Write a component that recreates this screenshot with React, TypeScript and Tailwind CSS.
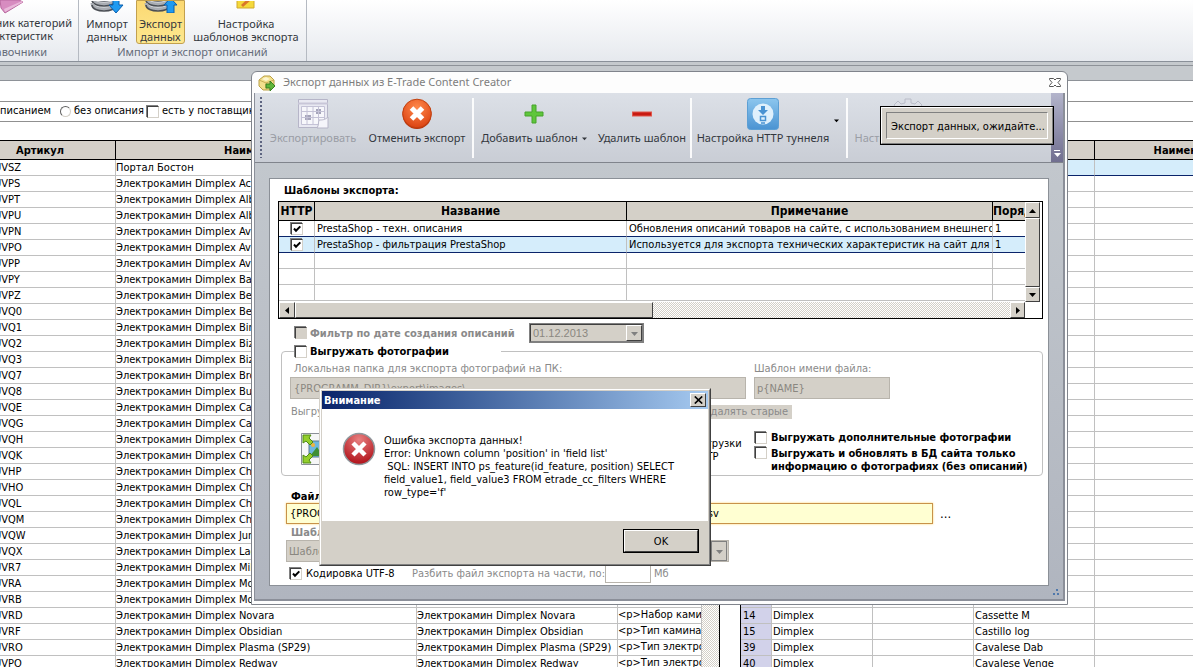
import type { ReactNode } from 'react';

const rows = [
  ['UVSZ', 'Портал Бостон', ''],
  ['UVPS', 'Электрокамин Dimplex Academy', ''],
  ['UVPT', 'Электрокамин Dimplex Albany', ''],
  ['UVPU', 'Электрокамин Dimplex Albany', ''],
  ['UVPN', 'Электрокамин Dimplex Avalon', ''],
  ['UVPO', 'Электрокамин Dimplex Avalon', ''],
  ['UVPP', 'Электрокамин Dimplex Avalon', ''],
  ['UVPY', 'Электрокамин Dimplex Bach', ''],
  ['UVPZ', 'Электрокамин Dimplex Bella', ''],
  ['UVQ0', 'Электрокамин Dimplex Belvedere', ''],
  ['UVQ1', 'Электрокамин Dimplex Bingham', ''],
  ['UVQ2', 'Электрокамин Dimplex Bizet', ''],
  ['UVQ3', 'Электрокамин Dimplex Bizet', ''],
  ['UVQ7', 'Электрокамин Dimplex Brookline', ''],
  ['UVQ8', 'Электрокамин Dimplex Burbank', ''],
  ['UVQE', 'Электрокамин Dimplex Cassette', ''],
  ['UVQG', 'Электрокамин Dimplex Castillo', ''],
  ['UVQH', 'Электрокамин Dimplex Cavalese', ''],
  ['UVQK', 'Электрокамин Dimplex Chalet', ''],
  ['UVHP', 'Электрокамин Dimplex Cheriton', ''],
  ['UVHO', 'Электрокамин Dimplex Cheriton', ''],
  ['UVQL', 'Электрокамин Dimplex Chester', ''],
  ['UVQM', 'Электрокамин Dimplex Chili', ''],
  ['UVQW', 'Электрокамин Dimplex Juneau', ''],
  ['UVQX', 'Электрокамин Dimplex Lagos', ''],
  ['UVR7', 'Электрокамин Dimplex Milan', ''],
  ['UVRA', 'Электрокамин Dimplex Mozart', ''],
  ['UVRB', 'Электрокамин Dimplex Mozart', ''],
  ['UVRD', 'Электрокамин Dimplex Novara', '<p>Набор каминный'],
  ['UVRF', 'Электрокамин Dimplex Obsidian', '<p>Тип камина - электро'],
  ['UVRO', 'Электрокамин Dimplex Plasma (SP29)', '<p>Тип электрокамина'],
  ['UVPQ', 'Электрокамин Dimplex Redway', '<p>Тип электрокамина'],
];

const found: Record<number, [string, string]> = {
  28: ['14', 'Cassette M'],
  29: ['15', 'Castillo log'],
  30: ['39', 'Cavalese Dab'],
  31: ['40', 'Cavalese Venge'],
};

const templates = [
  ['PrestaShop - техн. описания', 'Обновления описаний товаров на сайте, с использованием внешнего кода', '1'],
  ['PrestaShop - фильтрация PrestaShop', 'Используется для экспорта технических характеристик на сайт для фильтра', '1'],
];

const hatch = 'bg-[repeating-conic-gradient(#ffffff_0_25%,#d4d0c8_0_50%)] bg-[length:2px_2px]';
const raised = 'bg-[#d4d0c8] border border-t-white border-l-white border-r-[#404040] border-b-[#404040]';
const gridHead = 'bg-[#d4d0c8] border-r border-b border-black p-0 font-bold overflow-hidden whitespace-nowrap';
const gridCell = 'border-r border-b border-[#c0c0c0] p-0 overflow-hidden whitespace-nowrap';

function Check({ id, checked, disabled, label }: { id: string; checked?: boolean; disabled?: boolean; label?: string }) {
  return (
    <span className="grid size-3 shrink-0">
      <input id={id} type="checkbox" defaultChecked={checked} disabled={disabled} aria-label={label}
        className="peer col-start-1 row-start-1 size-3 appearance-none border border-t-[#404040] border-l-[#404040] border-r-[#d4d0c8] border-b-[#d4d0c8] bg-white shadow-[-1px_-1px_0_#808080] disabled:bg-[#d4d0c8]" />
      <svg viewBox="0 0 12 12" className="pointer-events-none invisible col-start-1 row-start-1 size-3 peer-checked:visible">
        <path d="M3 5.500 L5 7.800 L9.300 3.400" fill="none" stroke="#000" strokeWidth="2" />
      </svg>
    </span>
  );
}

function Arrow({ dir, color = '#000', small }: { dir: 'up' | 'down' | 'left' | 'right'; color?: string; small?: boolean }) {
  const d = { up: 'M0 6h7L3.5 2z', down: 'M0 2h7L3.5 6z', left: 'M5 0v7L1 3.5z', right: 'M2 0v7l4-3.5z' }[dir];
  return <svg viewBox="0 0 7 7" className={small ? 'size-[5px]' : 'size-[7px]'}><path d={d} fill={color} /></svg>;
}

function DbIcon({ up }: { up?: boolean }) {
  return (
    <svg viewBox="0 0 34 32" className="h-8 w-[34px]">
      <path d="M2 4v19c0 9 24 9 24 0V4z" fill="#eceef0" />
      {[7, 12, 17, 22].map(y => (
        <g key={y} fill="none">
          <path d={`M2 ${y}c0 8 24 8 24 0`} stroke="#a9adb3" strokeWidth="3" />
          <path d={`M2 ${y + 2}c0 8 24 8 24 0`} stroke="#4b4f55" strokeWidth="1.600" />
        </g>
      ))}
      {up
        ? <path d="M26.500 17l6.500 7h-3v8h-7v-8h-3z" fill="#1f9af0" stroke="#0b5fae" />
        : <path d="M23 14h6v10h4l-7 8-7-8h4z" fill="#1f9af0" stroke="#0b5fae" />}
    </svg>
  );
}

function RibbonButton({ icon, lines, active, width }: { icon: ReactNode; lines: string[]; active?: boolean; width: string }) {
  return (
    <button className={`flex flex-col items-center overflow-hidden border text-[11px] leading-[13px] text-[#33373d] ${width} ${active ? 'rounded-b-[3px] border-[#c2a04e] bg-linear-to-b from-[#fbd871] to-[#fde88f]' : 'border-transparent'}`}>
      <span className="-mt-5 flex h-9 items-start">{icon}</span>
      {lines.map(l => <span key={l} className="whitespace-nowrap">{l}</span>)}
    </button>
  );
}

function Ribbon() {
  return (
    <header className="flex h-[62px] shrink-0 overflow-hidden border-b border-[#8a9099] bg-linear-to-b from-white to-[#e6e9ee] font-['Noto_Sans',sans-serif]">
      <section className="flex w-[79px] flex-col justify-between overflow-hidden border-r border-[#b5bac2]">
        <button className="-ml-9 flex h-[44px] w-[108px] shrink-0 flex-col items-end text-[11px] leading-[13px] text-[#33373d]">
          <svg viewBox="0 0 24 14" className="mr-[48px] h-[14px] w-6 shrink-0">
            <path d="M0 0h19l4 2L5 13 1 8z" fill="#d78cc0" stroke="#b9689f" /><path d="M5 12l18-10-1-1L4 9z" fill="#e9b9da" />
          </svg>
          <span className="mt-0.5 whitespace-nowrap">Справочник категорий</span>
          <span className="mr-[19px] whitespace-nowrap">характеристик</span>
        </button>
        <span className="flex h-[18px] w-[47px] justify-end self-start text-[11px] text-[#646b78]"><span>Справочники</span></span>
      </section>
      <section className="flex w-[228px] flex-col border-r border-[#b5bac2]">
        <div className="flex h-[44px] shrink-0 justify-between pr-1 pl-1">
          <RibbonButton width="w-12" icon={<DbIcon />} lines={['Импорт', 'данных']} />
          <RibbonButton width="w-[49px]" active icon={<DbIcon up />} lines={['Экспорт', 'данных']} />
          <RibbonButton width="w-[112px]" lines={['Настройка', 'шаблонов экспорта']}
            icon={<svg viewBox="0 0 20 28" className="h-7 w-5"><path d="M1 0h17v27H1z" fill="#f5d93b" stroke="#d0a92c" /><path d="M6 25l9-8" stroke="#d9772b" strokeWidth="3" /></svg>} />
        </div>
        <span className="text-center text-[11px] leading-[16px] text-[#646b78]">Импорт и экспорт описаний</span>
      </section>
    </header>
  );
}

function Catalog() {
  return (
    <div className="flex min-h-0 flex-1 overflow-hidden text-[11px] leading-[15px]">
      <div className="flex w-[720px] shrink-0 overflow-hidden border-r border-black">
        <table className="-ml-[35px] h-min w-[737px] shrink-0 table-fixed border-separate border-spacing-0 border-t border-black">
          <colgroup><col className="w-[151px]" /><col className="w-[301px]" /><col className="w-[201px]" /><col className="w-[84px]" /></colgroup>
          <thead>
            <tr className="h-[19px]">
              <th className={gridHead}>Артикул</th><th className={gridHead}>Наименование</th>
              <th className={gridHead}>Полное наименование</th><th className={gridHead}>Описание</th>
            </tr>
          </thead>
          <tbody>
            {rows.map(([code, name, html]) => (
              <tr key={code} className="h-4">
                <td className={`${gridCell} pl-[29px]`}>{code}</td>
                <td className={gridCell}>{name}</td>
                <td className={gridCell}>{name}</td>
                <td className={`${gridCell} align-top leading-[13px]`}>{html}</td>
              </tr>
            ))}
          </tbody>
        </table>
        <div className={`w-[17px] shrink-0 ${hatch}`} />
      </div>
      <div className="ml-5 flex-1 overflow-hidden border-l border-black">
        <table className="w-[556px] table-fixed border-separate border-spacing-0 border-t border-black">
          <colgroup><col className="w-[31px]" /><col className="w-[101px]" /><col className="w-[101px]" /><col className="w-[121px]" /><col className="w-[202px]" /></colgroup>
          <thead>
            <tr className="h-[19px]">
              <th className={gridHead} /><th className={gridHead} /><th className={gridHead} />
              <th className={gridHead} /><th className={gridHead}>Наименование</th>
            </tr>
          </thead>
          <tbody>
            {rows.map(([code], i) => {
              const cell = i === 0 ? 'border-r border-b border-r-[#c0c0c0] border-b-[#0a246a] bg-[#d5edfb] p-0' : gridCell;
              return (
                <tr key={code} className="h-4">
                  <td className="border-r border-b border-[#c0c0c0] bg-[#d2d2ea] p-0 pl-0.5">{found[i]?.[0]}</td>
                  <td className={`${cell} pl-px`}>{found[i] && 'Dimplex'}</td>
                  <td className={cell} />
                  <td className={`${cell} pl-px`}>{found[i]?.[1]}</td>
                  <td className={cell} />
                </tr>
              );
            })}
          </tbody>
        </table>
      </div>
    </div>
  );
}

function ToolButton({ icon, text, width, disabled, menu }: { icon: ReactNode; text: string; width: string; disabled?: boolean; menu?: boolean }) {
  return (
    <button disabled={disabled} className={`flex flex-col items-center pt-1 text-[#33373d] disabled:text-[#9a9da5] ${width}`}>
      <span className="flex h-[34px] items-center">{icon}</span>
      <span className="flex items-center gap-1 whitespace-nowrap leading-[14px]">{text}{menu && <Arrow small dir="down" color="#33373d" />}</span>
    </button>
  );
}

const Divider = () => <span className="my-[5px] h-[60px] w-0.5 shrink-0 bg-white/90" />;

function Toolbar() {
  return (
    <div className="flex h-[70px] shrink-0 overflow-hidden border-b border-[#80848c] bg-linear-to-b from-[#dce0e7] to-[#c9cdd5] pl-[5px] font-['Noto_Sans',sans-serif] text-[11px]">
      <span className="my-1 mr-0.5 w-0.5 shrink-0 bg-[repeating-linear-gradient(#5d6480_0_2px,transparent_2px_4px)]" />
      <ToolButton disabled width="w-[98px]" text="Экспортировать" icon={
        <svg viewBox="0 0 32 32" className="size-8">
          <path d="M1.500 1.500h29v19l-9 9h-20z" fill="#e9e9f2" stroke="#b6b5c8" />
          <path d="M1 5.500h30" stroke="#c8c6d8" strokeWidth="2" />
          <path d="M4.500 8.500h23v18h-23z" fill="#f7f7fb" />
          <path d="M8 17h6v5H8zM19 11h5v5h-5z" fill="#a5a4ba" />
          <path d="M4.500 8.500h23v13l-6 5h-17zM4.500 13.500h23M4.500 19.500h23M10 8.500v18M16 8.500v18M21.500 8.500v14" fill="none" stroke="#c4c2d6" />
          <path d="M20 30c2-3 1-5 2-8 3 0 6 0 9-3v11z" fill="#f5f5fa" stroke="#b6b5c8" />
        </svg>} />
      <ToolButton width="w-[110px]" text="Отменить экспорт" icon={
        <svg viewBox="0 0 32 32" className="size-8">
          <defs><radialGradient id="stop" cx=".5" cy=".3" r=".7"><stop offset="0" stopColor="#ff8a4c" /><stop offset="1" stopColor="#dc4312" /></radialGradient></defs>
          <circle cx="16" cy="16.500" r="14.500" fill="#b6330c" /><circle cx="16" cy="15.500" r="14.300" fill="url(#stop)" stroke="#c2410f" />
          <path d="M10.500 10l11 11M21.500 10l-11 11" stroke="#fff" strokeWidth="5" />
        </svg>} />
      <Divider />
      <ToolButton menu width="w-[120px]" text="Добавить шаблон" icon={
        <svg viewBox="0 0 20 20" className="size-5"><path d="M8 1h4v7h7v4h-7v7H8v-7H1V8h7z" fill="#5fc63c" stroke="#46a32a" /></svg>} />
      <ToolButton width="w-[96px]" text="Удалить шаблон" icon={
        <svg viewBox="0 0 20 6" className="h-1.5 w-5"><path d="M0 .5h20v5H0z" fill="#e0564a" /><path d="M1 1.500h18v3H1z" fill="#c81a12" /></svg>} />
      <Divider />
      <ToolButton width="w-[142px]" text="Настройка HTTP туннеля" icon={
        <svg viewBox="0 0 32 32" className="size-8">
          <defs><linearGradient id="tunnel" x2="0" y2="1"><stop stopColor="#8cc6ee" /><stop offset="1" stopColor="#4a93d2" /></linearGradient></defs>
          <rect x=".5" y=".5" width="31" height="31" rx="3" fill="url(#tunnel)" stroke="#5c9fd4" />
          <circle cx="16" cy="16" r="10.500" fill="#dff0fc" />
          <path d="M14 8h4v4h3l-5 5-5-5h3z" fill="#4a93d2" /><path d="M13.500 18.500h5v4h-5zM14 25h4" fill="none" stroke="#4a93d2" strokeWidth="1.500" />
        </svg>} />
      <button aria-label="Ещё" className="flex h-[54px] w-3 items-center justify-start"><Arrow small dir="down" /></button>
      <Divider />
      <ToolButton disabled width="w-[120px]" text="Настройка экспорта" icon={
        <svg viewBox="0 0 32 32" className="size-8"><path d="M13 1h6v4l4 1 3-3 4 4-3 4v10H5V11L2 7l4-4 3 3 4-1z" fill="#dcdfe6" stroke="#b9bcc8" /></svg>} />
      <span className="ml-auto flex w-3 shrink-0 flex-col items-center justify-end bg-linear-to-b from-[#b3b4cb] to-[#716f90] pb-1">
        <span className="h-px w-[6px] bg-white" /><Arrow dir="down" color="#fff" />
      </span>
    </div>
  );
}

function TemplateGrid() {
  return (
    <div className="mr-[5px] ml-2 flex h-[118px] shrink-0 flex-col overflow-hidden border border-black text-[11px] leading-[15px]">
      <div className="flex h-[100px] shrink-0 overflow-hidden">
        <div className="min-w-0 flex-1 overflow-hidden">
          <table className="w-[800px] table-fixed border-separate border-spacing-0">
            <colgroup><col className="w-9" /><col className="w-[312px]" /><col className="w-[366px]" /><col /></colgroup>
            <thead>
              <tr className="h-[19px] text-[12px]">
                <th className={gridHead}>HTTP</th><th className={gridHead}>Название</th>
                <th className={gridHead}>Примечание</th><th className={`${gridHead} text-left`}>Порядок</th>
              </tr>
            </thead>
            <tbody>
              {[0, 1, 2, 3, 4].map(i => {
                const t = templates[i];
                const tone = i === 1 ? 'bg-[#d5edfb] border-b-[#0a246a]' : i === 0 ? 'border-b-[#0a246a]' : 'border-b-[#c0c0c0]';
                const cell = `border-r border-b border-r-[#c0c0c0] p-0 pl-0.5 overflow-hidden whitespace-nowrap ${tone}`;
                return (
                  <tr key={i} className="h-4">
                    <td className={cell}>{t && <span className="flex justify-center pr-0.5"><Check id={`http${i}`} checked label={`HTTP ${t[0]}`} /></span>}</td>
                    <td className={cell}>{t?.[0]}</td>
                    <td className={cell}>{t?.[1]}</td>
                    <td className={cell}>{t?.[2]}</td>
                  </tr>
                );
              })}
            </tbody>
          </table>
        </div>
        <div className="mr-0.5 flex w-[15px] shrink-0 flex-col">
          <button aria-label="Вверх" className={`grid h-4 place-items-center ${raised}`}><Arrow dir="up" /></button>
          <div className={`flex-1 ${raised}`} />
          <button aria-label="Вниз" className={`grid h-[15px] place-items-center ${raised}`}><Arrow dir="down" /></button>
        </div>
      </div>
      <div className={`mr-[17px] flex h-4 ${hatch}`}>
        <button aria-label="Влево" className={`grid w-4 place-items-center ${raised}`}><Arrow dir="left" /></button>
        <div className={`w-[358px] ${raised}`} />
        <button aria-label="Вправо" className={`ml-auto grid w-[15px] place-items-center ${raised}`}><Arrow dir="right" /></button>
      </div>
    </div>
  );
}

function ExportForm() {
  const off = 'border border-[#b8b4ac] bg-[#d4d0c8] text-[#8a8780]';
  return (
    <form className="mr-[14px] ml-[14px] flex h-[408px] flex-col border border-[#8b9097] bg-white text-[11px] leading-[13px]">
      <h2 className="h-[22px] pt-[5px] pl-[14px] font-bold">Шаблоны экспорта:</h2>
      <TemplateGrid />
      <div className="mt-1 flex h-5 shrink-0 items-center pl-[25px] text-[#8a8a8a]">
        <Check id="byDate" disabled />
        <label htmlFor="byDate" className="w-[222px] pl-[3px] font-bold whitespace-nowrap">Фильтр по дате создания описаний</label>
        <span className="grid h-5 w-[115px] border border-[#808080]">
          <select disabled aria-label="Дата" className="col-start-1 row-start-1 appearance-none border border-[#404040] border-r-[#808080] border-b-[#808080] bg-[#d4d0c8] pl-0.5 font-['Liberation_Sans',sans-serif] text-[#8a8780]"><option>01.12.2013</option></select>
          <span className={`pointer-events-none col-start-1 row-start-1 m-px grid w-4 place-items-center justify-self-end ${raised}`}><Arrow dir="down" color="#808080" /></span>
        </span>
      </div>
      <fieldset className="mt-px mr-[5px] ml-[11px] h-[132px] shrink-0 rounded-[4px] border border-[#c0c0c0]">
        <legend className="ml-[13px] flex h-[15px] w-[206px] items-center">
          <Check id="photos" /><label htmlFor="photos" className="pl-[3px] font-bold">Выгружать фотографии</label>
        </legend>
        <div className="mt-px flex gap-2 pl-2 text-[#8a8a8a]">
          <label className="flex w-[456px] flex-col"><span className="h-[17px] pt-0.5 pl-1">Локальная папка для экспорта фотографий на ПК:</span>
            <input disabled defaultValue="{PROGRAMM_DIR}\export\images\" className={`h-[22px] pl-[3px] ${off}`} /></label>
          <label className="flex w-[136px] flex-col"><span className="h-[17px] pt-0.5">Шаблон имени файла:</span>
            <input disabled defaultValue="p{NAME}" className={`h-[22px] pl-0.5 ${off}`} /></label>
        </div>
        <div className="mt-[6px] flex h-[14px] justify-between pr-[250px] pl-[9px] text-[#8a8a8a]">
          <span>Выгружать</span><span className="bg-[#d4d0c8] pr-1">Удалять старые</span>
        </div>
        <div className="mt-3 flex pl-[19px]">
          <svg viewBox="0 0 32 32" className="mt-0.5 size-8 shrink-0">
            <path d="M.5.5h31v31H.5z" fill="#f6f7f7" stroke="#8b9097" /><path d="M8 8h20v16H8z" fill="#6db8df" stroke="#5d788c" /><path d="M9 23l7-9 6 9z" fill="#3e8f34" /><circle cx="12" cy="12" r="2" fill="#f0b53c" />
            <path d="M2 2h8L8 5l4 4-3 3-4-4-3 2zM2 30h8l-2-3 4-4-3-3-4 4-3-2z" fill="#94cf2c" stroke="#4e8a15" />
          </svg>
          <div className="mt-[6px] ml-[360px] w-[62px]"><span className="block">выгрузки</span><span className="block pl-2">FTP</span></div>
          <div className="flex flex-col gap-[3px] font-bold whitespace-nowrap">
            <div className="flex items-center gap-1"><Check id="extra" /><label htmlFor="extra">Выгружать дополнительные фотографии</label></div>
            <div className="flex items-start gap-1"><Check id="infoOnly" /><label htmlFor="infoOnly">Выгружать и обновлять в БД сайта только<br />информацию о фотографиях (без описаний)</label></div>
          </div>
        </div>
      </fieldset>
      <label htmlFor="file" className="mt-[14px] h-[13px] shrink-0 pl-[21px] font-bold">Файл экспорта:</label>
      <div className="flex h-[21px] shrink-0 items-center pl-4">
        <input id="file" defaultValue="{PROGRAMM_DIR}\export\prestashop\filters\prestashop_export_filters_data_v2_10.csv" className="h-[21px] w-[647px] border border-[#c8924a] bg-[#ffffd2] pl-[3px] shadow-[0_0_2px_#ffd76a]" />
        <button type="button" className="pl-[7px] text-[13px]">...</button>
      </div>
      <label htmlFor="tpl" className="mt-[2px] h-[14px] shrink-0 pl-[21px] font-bold text-[#8a8a8a]">Шаблон:</label>
      <span className="ml-4 grid h-[22px] w-[443px] shrink-0">
        <select id="tpl" disabled className={`col-start-1 row-start-1 appearance-none pl-0.5 ${off}`}><option>Шаблон</option></select>
        <span className="pointer-events-none col-start-1 row-start-1 m-px mr-0.5 grid w-4 place-items-center justify-self-end border border-[#808080] bg-[#d4d0c8]"><Arrow dir="down" color="#808080" /></span>
      </span>
      <div className="mt-0.5 flex h-[19px] shrink-0 items-center pl-5">
        <Check id="utf" checked /><label htmlFor="utf" className="w-[110px] pl-1">Кодировка UTF-8</label>
        <label htmlFor="split" className="w-[193px] whitespace-nowrap text-[#8a8a8a]">Разбить файл экспорта на части, по:</label>
        <input id="split" className="h-[19px] w-[46px] border border-[#b8b4ac]" /><span className="pl-[3px] text-[#8a8a8a]">Мб</span>
      </div>
    </form>
  );
}

function ExportWindow() {
  return (
    <section className="absolute top-[71px] left-[251px] flex h-[534px] w-[817px] flex-col rounded-t-[6px] border border-[#80848c] bg-[#fdfdfd] px-[2px] pb-[3px]">
      <div className="flex h-[21px] shrink-0 items-center pr-1 pl-1 font-['Noto_Sans',sans-serif] text-[11px] text-[#7d7d7d]">
        <svg viewBox="0 0 18 18" className="size-[18px]">
          <path d="M1 6l5-4 6 0 4 4v6l-5 4H5l-4-4z" fill="#f2df8c" stroke="#b99f45" /><path d="M1 6l7 3 8-3M8 9v7" fill="none" stroke="#c8ae56" /><path d="M4 5l4-2 4 2-4 2z" fill="#fdf6cf" />
          <path d="M8 10h4V7l5 5-5 5v-3H8z" fill="#5fb53a" stroke="#397f20" />
        </svg>
        <h1 className="pl-[7px]">Экспорт данных из E-Trade Content Creator</h1>
        <button aria-label="Закрыть" className="ml-auto">
          <svg viewBox="0 0 12 11" className="h-[11px] w-3"><path d="M.5 1.500h4L6 3l1.500-1.500h4v1L9 5.500l2.500 3v1h-4L6 8 4.500 9.500h-4v-1L3 5.500l-2.500-3z" fill="#fff" stroke="#555" /></svg>
        </button>
      </div>
      <div className="flex flex-1 flex-col border-r-2 border-b-2 border-l border-[#8b8f99] bg-linear-to-b from-[#c5cacf] to-[#b0b5bf]">
        <Toolbar />
        <div className="pt-[15px]"><ExportForm /></div>
        <svg viewBox="0 0 6 6" className="mt-auto mr-1 mb-1 size-1.5 shrink-0 self-end"><path d="M3 0h2v2H3zM0 4h2v2H0zM4 4h2v2H4z" fill="#4f78ab" /></svg>
      </div>
    </section>
  );
}

function ErrorBox() {
  return (
    <section role="alertdialog" className="absolute top-[388px] left-[319px] flex h-[178px] w-[392px] flex-col border border-t-[#d4d0c8] border-l-[#d4d0c8] border-r-[#404040] border-b-[#404040] bg-[#d4d0c8] text-[11px] leading-[13px]">
      <div className="flex flex-1 flex-col border border-t-white border-l-white border-r-[#808080] border-b-[#808080] p-px pb-0">
        <div className="flex h-[18px] items-center justify-between bg-linear-to-r from-[#0a246a] to-[#a6caf0] pr-0.5 pl-0.5 font-bold text-white">
          Внимание
          <button aria-label="Закрыть" className={`grid h-[14px] w-4 place-items-center ${raised}`}>
            <svg viewBox="0 0 9 8" className="h-2 w-[9px]"><path d="M.8.5l7.400 7M8.200.5l-7.400 7" stroke="#000" strokeWidth="1.700" /></svg>
          </button>
        </div>
        <div className="flex h-[112px] gap-2 bg-white pt-[25px] pl-5">
          <svg viewBox="0 0 34 34" className="-mt-0.5 size-[34px]">
            <defs><radialGradient id="err" cx=".5" cy=".2" r=".8"><stop offset="0" stopColor="#e88080" /><stop offset="1" stopColor="#b01018" /></radialGradient></defs>
            <circle cx="17" cy="17" r="15.500" fill="url(#err)" stroke="#8f979c" strokeWidth="1.500" />
            <path d="M11 11l12 12M23 11L11 23" stroke="#fff" strokeWidth="4.500" />
          </svg>
          <p className="whitespace-pre">{`Ошибка экспорта данных!
Error: Unknown column 'position' in 'field list'
 SQL: INSERT INTO ps_feature(id_feature, position) SELECT
field_value1, field_value3 FROM etrade_cc_filters WHERE
row_type='f'`}</p>
        </div>
        <div className="flex justify-end pt-2 pr-[9px]">
          <button className="h-6 w-[76px] border border-black p-0"><span className={`grid size-full place-items-center ${raised}`}>OK</span></button>
        </div>
      </div>
    </section>
  );
}

export default function App() {
  return (
    <main className="relative flex h-screen flex-col overflow-hidden bg-white font-['DejaVu_Sans_Condensed','Noto_Sans',sans-serif] text-black">
      <Ribbon />
      <div className="h-[19px] shrink-0 border-b border-[#8e9298] bg-[#c5c9cd] pt-[3px]"><div className="h-px bg-[#8e9298]" /></div>
      <div className="h-[21px] shrink-0 border-b border-[#909090]" />
      <div className="flex h-5 shrink-0 items-center overflow-hidden border-b border-[#909090] text-[11px] whitespace-nowrap">
        <span className="flex w-[60px] shrink-0 justify-end pr-[9px]"><label htmlFor="withDesc">с описанием</label></span>
        <input id="noDesc" type="radio" name="desc" className="size-[11px] shrink-0 appearance-none rounded-full border border-[#606060] border-r-[#d4d0c8] border-b-[#d4d0c8] bg-white" />
        <label htmlFor="noDesc" className="w-[76px] shrink-0 pl-[3px]">без описания</label>
        <Check id="supplier" /><label htmlFor="supplier" className="pl-[3px]">есть у поставщика</label>
      </div>
      <div className="h-[18px] shrink-0" />
      <Catalog />

      <ExportWindow />
      <section role="status" className="absolute top-[106px] left-[880px] w-[174px] border border-black bg-[#d4d0c8]">
        <div className="border border-t-white border-l-white border-r-[#808080] border-b-[#808080] p-1">
          <p className="border border-t-[#808080] border-l-[#808080] border-r-white border-b-white pt-[6px] pb-1 pl-1 text-[11px] leading-[15px] whitespace-nowrap">Экспорт данных, ожидайте...</p>
        </div>
      </section>
      <ErrorBox />
    </main>
  );
}
